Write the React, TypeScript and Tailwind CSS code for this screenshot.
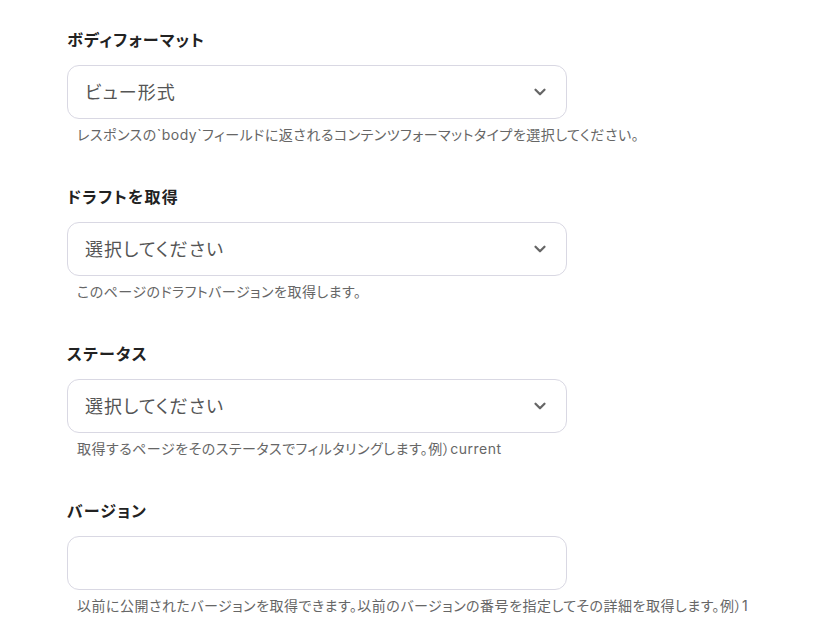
import { ChevronDown } from 'lucide-react'

const fields = [
  {
    label: 'ボディフォーマット',
    value: 'ビュー形式',
    select: true,
    help: 'レスポンスの`body`フィールドに返されるコンテンツフォーマットタイプを選択してください。',
  },
  {
    label: 'ドラフトを取得',
    value: '選択してください',
    select: true,
    help: 'このページのドラフトバージョンを取得します。',
  },
  {
    label: 'ステータス',
    value: '選択してください',
    select: true,
    help: '取得するページをそのステータスでフィルタリングします。例）current',
  },
  {
    label: 'バージョン',
    value: '',
    select: false,
    help: '以前に公開されたバージョンを取得できます。以前のバージョンの番号を指定してその詳細を取得します。例）1',
  },
]

export default function App() {
  return (
    <div
      className="min-h-screen bg-white pl-[67px] pt-[28px] [font-feature-settings:'palt']"
      style={{ fontFamily: 'Inter, "Noto Sans CJK JP", sans-serif' }}
    >
      <div className="flex flex-col gap-[40px]">
        {fields.map((f) => (
          <div key={f.label} className="flex flex-col">
            <div className="text-[16px] font-bold leading-[24px] tracking-[1.2px] text-[#222]">
              {f.label}
            </div>
            <div className="mt-[13px] flex h-[54px] w-[500px] items-center justify-between rounded-[12px] border border-[#d9d8e3] bg-white pl-[17px] pr-[17px]">
              <span className="text-[18px] tracking-[1.1px] text-[#555]">{f.value}</span>
              {f.select ? (
                <ChevronDown className="h-[18px] w-[18px] text-[#666]" strokeWidth={3} />
              ) : null}
            </div>
            <div className="mt-[6px] pl-[10px] text-[14px] leading-[20px] tracking-[0.5px] text-[#666]">
              {f.help}
            </div>
          </div>
        ))}
      </div>
    </div>
  )
}
